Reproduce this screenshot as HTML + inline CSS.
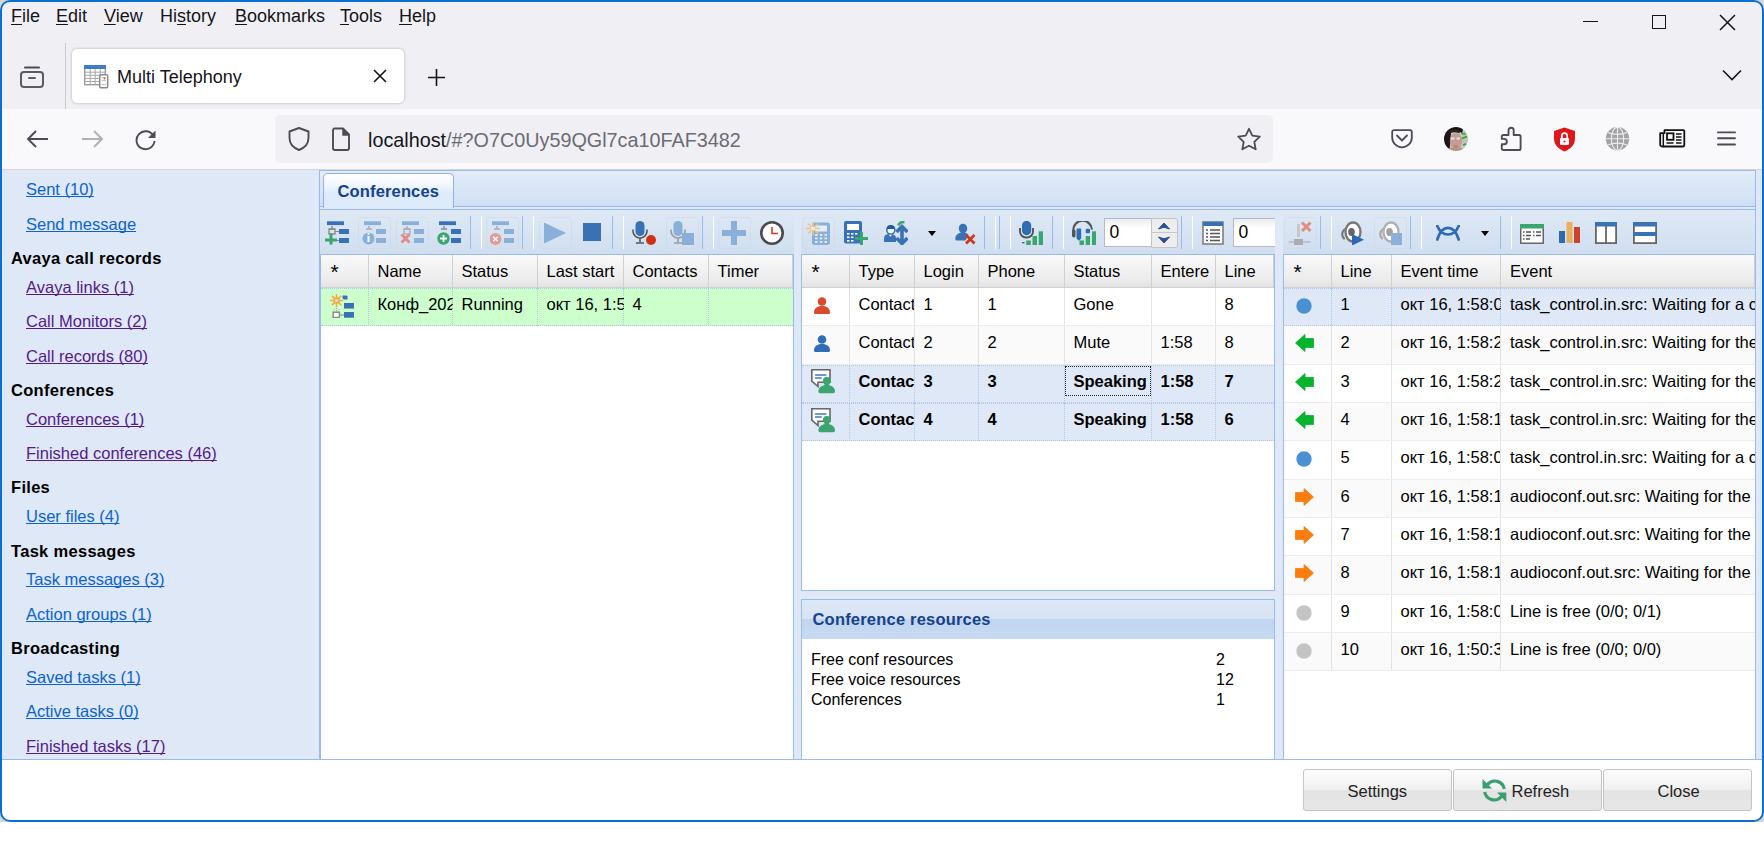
<!DOCTYPE html><html><head><meta charset="utf-8"><title>Multi Telephony</title><style>
*{box-sizing:border-box;margin:0;padding:0}
html,body{width:1764px;height:864px;overflow:hidden;background:#fff;font-family:"Liberation Sans", sans-serif;position:relative}
.a{position:absolute}
.t{position:absolute;white-space:nowrap;line-height:1}
.menu{font-size:18px;color:#15141a}
.menu u{text-decoration:underline;text-underline-offset:1.5px;text-decoration-thickness:1.2px}
.sl{position:absolute;white-space:nowrap;font-size:16.5px;line-height:1;text-decoration:underline;text-decoration-skip-ink:none;text-underline-offset:1px;text-decoration-thickness:1px;color:#0b63cf}
.sl.v{color:#551a8b}
.sh{position:absolute;white-space:nowrap;font-size:16.5px;line-height:1;color:#000;font-weight:bold;letter-spacing:0.3px}
.tb{position:absolute;height:45px;top:209px;border-top:1px solid #99bbe8;background:linear-gradient(#dfe9f5,#d0def0)}
.sep{position:absolute;top:216px;width:12px;height:33px;border-left:1px solid #99bbe8;border-right:1px solid #fff}
.ic{position:absolute;top:221px;width:24px;height:24px;overflow:visible}
.gh{position:absolute;top:255px;height:33px;background:linear-gradient(#f9f9f9,#ececec 75%,#e3e3e3);border-bottom:1px solid #d0d0d0}
.hc{position:absolute;top:0;height:32px;border-right:1px solid #d0d0d0}
.hc span{position:absolute;left:9px;top:8px;font-size:16.5px;line-height:1;white-space:nowrap;color:#000}
.row{position:absolute;height:38.4px;overflow:hidden;border-bottom:1px solid #ededed}
.cell{position:absolute;top:0;height:100%;overflow:hidden;border-right:1px solid #ededed}
.cell span{position:absolute;left:9px;top:8px;font-size:16.5px;line-height:1;white-space:nowrap;color:#000}
.btn{position:absolute;top:769px;height:42px;width:149px;border:1px solid #c4c4c4;border-radius:3px;background:linear-gradient(#fdfdfd 0%,#f0f0f0 48%,#e3e3e3 52%,#e6e6e6 100%)}
.btn span{position:absolute;top:12.5px;font-size:16.5px;line-height:1;color:#222;white-space:nowrap}
</style></head><body>
<div class="a" style="left:0;top:0;width:1764px;height:109px;background:#f0f0f4"></div>
<div class="t menu" style="left:11px;top:7px"><u>F</u>ile</div>
<div class="t menu" style="left:56px;top:7px"><u>E</u>dit</div>
<div class="t menu" style="left:104px;top:7px"><u>V</u>iew</div>
<div class="t menu" style="left:160px;top:7px">Hi<u>s</u>tory</div>
<div class="t menu" style="left:235px;top:7px"><u>B</u>ookmarks</div>
<div class="t menu" style="left:340px;top:7px"><u>T</u>ools</div>
<div class="t menu" style="left:399px;top:7px"><u>H</u>elp</div>
<div class="a" style="left:1583px;top:21px;width:15px;height:1px;background:#15141a"></div>
<div class="a" style="left:1652px;top:15px;width:14px;height:14px;border:1.2px solid #15141a"></div>
<svg class="a" style="left:1719px;top:14px" width="17" height="17" viewBox="0 0 17 17"><path d="M1 1L16 16M16 1L1 16" stroke="#15141a" stroke-width="1.5"/></svg>
<svg class="a" style="left:19px;top:63px" width="26" height="26" viewBox="0 0 26 26"><path d="M6 4.5h14" stroke="#4c4b56" stroke-width="2" stroke-linecap="round"/><rect x="2" y="9" width="22" height="15" rx="3" fill="none" stroke="#5b5b66" stroke-width="2"/><path d="M10 15h6" stroke="#5b5b66" stroke-width="2" stroke-linecap="round"/></svg>
<div class="a" style="left:65px;top:43px;width:1px;height:66px;background:#c8c8cf"></div>
<div class="a" style="left:72px;top:49px;width:332px;height:54px;background:#fff;border-radius:5px;box-shadow:0 0 3px rgba(0,0,0,.28)"></div>
<svg class="a" style="left:84px;top:65px" width="25" height="24" viewBox="0 0 25 24">
<rect x="0.7" y="0.7" width="20.6" height="19" fill="#fff" stroke="#9a9a9a" stroke-width="1.4"/>
<rect x="0" y="0" width="22" height="4" fill="#3f7cc4"/>
<path d="M0.7 7.2h20.6M0.7 10.3h20.6M0.7 13.4h20.6M0.7 16.5h20.6M6.2 4v15.7M11.2 4v15.7M16.2 4v15.7" stroke="#a8a8a8" stroke-width="1"/>
<rect x="15.7" y="9.7" width="8" height="13" rx="1.2" fill="#fff" stroke="#8a8a8a" stroke-width="1.5"/>
<path d="M17.5 12.5h4.5M17.5 15.7h4.5M17.5 19.5h4.5" stroke="#bdbdbd" stroke-width="1"/><circle cx="20.5" cy="13.5" r="0.9" fill="#e0503a"/>
</svg>
<div class="t" style="left:117px;top:68px;font-size:18px;color:#15141a">Multi Telephony</div>
<svg class="a" style="left:373px;top:69px" width="14" height="14" viewBox="0 0 14 14"><path d="M1 1L13 13M13 1L1 13" stroke="#15141a" stroke-width="1.6"/></svg>
<svg class="a" style="left:427px;top:68px" width="19" height="19" viewBox="0 0 19 19"><path d="M9.5 1v17M1 9.5h17" stroke="#15141a" stroke-width="1.6"/></svg>
<svg class="a" style="left:1722px;top:69px" width="20" height="13" viewBox="0 0 20 13"><path d="M1 1.5L10 10.5L19 1.5" fill="none" stroke="#15141a" stroke-width="1.6"/></svg>
<div class="a" style="left:0;top:109px;width:1764px;height:61px;background:#f9f9fb;border-bottom:1px solid #d4d4da"></div>
<svg class="a" style="left:26px;top:129px" width="24" height="20" viewBox="0 0 24 20"><path d="M22 10H3M10 2L2 10L10 18" fill="none" stroke="#4c4b56" stroke-width="1.9"/></svg>
<svg class="a" style="left:80px;top:129px" width="24" height="20" viewBox="0 0 24 20"><path d="M2 10H21M14 2L22 10L14 18" fill="none" stroke="#b0b0b7" stroke-width="2"/></svg>
<svg class="a" style="left:134px;top:127px" width="24" height="24" viewBox="0 0 24 24"><path d="M19.5 9A9 9 0 1 0 20.5 14" fill="none" stroke="#4c4b56" stroke-width="1.9"/><path d="M21.5 3.5V11H14z" fill="#4c4b56"/></svg>
<div class="a" style="left:275px;top:115px;width:998px;height:48px;background:#f0f0f4;border-radius:5px"></div>
<svg class="a" style="left:287px;top:126px" width="24" height="26" viewBox="0 0 24 26"><path d="M12 2L2.5 5.5V12c0 6 4.5 10 9.5 12c5-2 9.5-6 9.5-12V5.5z" fill="none" stroke="#4c4b56" stroke-width="1.9" stroke-linejoin="round"/></svg>
<svg class="a" style="left:331px;top:127px" width="20" height="24" viewBox="0 0 20 24"><path d="M3 1.5h9l6 6V21a2 2 0 0 1-2 2H4a2 2 0 0 1-2-2V3.5a2 2 0 0 1 1-2z" fill="none" stroke="#4c4b56" stroke-width="1.9" stroke-linejoin="round"/><path d="M12 1.5V8h6" fill="#4c4b56" stroke="#4c4b56" stroke-width="1.5"/></svg>
<div class="t" style="left:368px;top:131px;font-size:19.8px;color:#15141a">localhost<span style="color:#6b6b73">/#?O7C0Uy59QGl7ca10FAF3482</span></div>
<svg class="a" style="left:1236px;top:127px" width="26" height="24" viewBox="0 0 26 24"><path d="M13 1.8l3.3 6.9 7.5 1-5.5 5.2 1.4 7.4L13 18.7l-6.7 3.6 1.4-7.4L2.2 9.7l7.5-1z" fill="none" stroke="#4c4b56" stroke-width="1.8" stroke-linejoin="round"/></svg>
<svg class="a" style="left:1391px;top:129px" width="22" height="20" viewBox="0 0 22 20"><path d="M3 1.2h16a1.8 1.8 0 0 1 1.8 1.8V8.5a9.8 9.8 0 0 1-19.6 0V3a1.8 1.8 0 0 1 1.8-1.8z" fill="none" stroke="#4c4b56" stroke-width="1.8"/><path d="M6 6.5l5 5 5-5" fill="none" stroke="#4c4b56" stroke-width="1.8" stroke-linecap="round" stroke-linejoin="round"/></svg>
<svg class="a" style="left:1444px;top:127px" width="24" height="24" viewBox="0 0 24 24"><defs><clipPath id="avc"><circle cx="12" cy="12" r="12"/></clipPath><filter id="avb"><feGaussianBlur stdDeviation="0.6"/></filter></defs><g clip-path="url(#avc)"><g filter="url(#avb)"><rect width="24" height="24" fill="#c5ccc4"/><path d="M17 4l8 1v12l-5 3z" fill="#b8c8b0"/><path d="M17.5 6.5l4 0.5M18 11.5l5-2M19 18l3-1" stroke="#3c9a3a" stroke-width="1.6"/><path d="M-1 0h19c1 2 1 4 0 6-3-2-9-2-11 0l-1.5 18H-1z" fill="#1a1616"/><path d="M5 5c3-1.5 8-1.5 11 0" stroke="#2a2220" stroke-width="3" fill="none"/><ellipse cx="12" cy="14" rx="6.2" ry="8" fill="#c79a93"/><path d="M2 25c2-4 6-5 10-5s8 1 10 5z" fill="#bb9480"/><path d="M7 11.5h3.5M12.5 11.5h3.5" stroke="#dfe3ea" stroke-width="1.8"/><path d="M10 19h4" stroke="#b07070" stroke-width="1.2"/></g></g></svg>
<svg class="a" style="left:1500px;top:126px" width="23" height="26" viewBox="0 0 23 26"><path d="M8.5 9V4.3a2.6 2.6 0 0 1 5.2 0V9H19a1.6 1.6 0 0 1 1.6 1.6V22.4A1.6 1.6 0 0 1 19 24H3.4a1.6 1.6 0 0 1-1.6-1.6V18.3H4.2a2.7 2.7 0 0 0 0-5.4H1.8V10.6A1.6 1.6 0 0 1 3.4 9z" fill="none" stroke="#4c4b56" stroke-width="1.9" stroke-linejoin="round"/></svg>
<svg class="a" style="left:1553px;top:127px" width="23" height="25" viewBox="0 0 23 25"><path d="M11.5 0.5L1 4v7.5c0 6.5 4.5 10.5 10.5 13c6-2.5 10.5-6.5 10.5-13V4z" fill="#e0161b"/><rect x="7" y="11" width="9" height="7" rx="1" fill="#fff"/><path d="M8.8 11V8.8a2.7 2.7 0 0 1 5.4 0V11" fill="none" stroke="#fff" stroke-width="1.7"/><circle cx="11.5" cy="14.5" r="1.1" fill="#e0161b"/></svg>
<svg class="a" style="left:1605px;top:127px" width="25" height="24" viewBox="0 0 25 24"><circle cx="12.5" cy="11.8" r="11.7" fill="#a3a3a6"/><g fill="none" stroke="#ececef" stroke-width="1.1"><ellipse cx="12.5" cy="11.8" rx="6.2" ry="11.7"/><path d="M12.5 0v24M0.5 11.8h24"/><path d="M3 5.5c5 2.5 14 2.5 19 0M3 18c5-2.5 14-2.5 19 0"/></g></svg>
<svg class="a" style="left:1659px;top:129px" width="27" height="19" viewBox="0 0 27 19"><path d="M5.5 1.2h18.8a1 1 0 0 1 1 1V16.3a1.2 1.2 0 0 1-1.2 1.2H3a1.8 1.8 0 0 1-1.8-1.8V4.2h4.3z" fill="none" stroke="#111" stroke-width="1.8" stroke-linejoin="round"/><path d="M4.3 4.5V17" stroke="#111" stroke-width="1.5"/><rect x="8" y="4.3" width="6.5" height="6.5" fill="none" stroke="#111" stroke-width="1.8"/><path d="M17 5h5.5M17 8h5.5M17 11h5.5M7.5 14h7M17 14h5.5" stroke="#111" stroke-width="1.4"/></svg>
<svg class="a" style="left:1716px;top:130px" width="21" height="17" viewBox="0 0 21 17"><path d="M2 2.4h17M2 8.3h17M2 14.5h17" stroke="#4c4b56" stroke-width="1.9" stroke-linecap="round"/></svg>
<div class="a" style="left:0;top:170px;width:1764px;height:590px;background:#dfe8f6;border-bottom:1px solid #99bbe8"></div>
<div class="a" style="left:0;top:760px;width:1764px;height:62px;background:#fff"></div>
<div class="sl" style="left:26px;top:181px">Sent (10)</div>
<div class="sl" style="left:26px;top:215.5px">Send message</div>
<div class="sh" style="left:11px;top:250px">Avaya call records</div>
<div class="sl v" style="left:26px;top:278.5px">Avaya links (1)</div>
<div class="sl v" style="left:26px;top:313px">Call Monitors (2)</div>
<div class="sl v" style="left:26px;top:347.5px">Call records (80)</div>
<div class="sh" style="left:11px;top:381.5px">Conferences</div>
<div class="sl v" style="left:26px;top:410.5px">Conferences (1)</div>
<div class="sl v" style="left:26px;top:445px">Finished conferences (46)</div>
<div class="sh" style="left:11px;top:479px">Files</div>
<div class="sl" style="left:26px;top:508px">User files (4)</div>
<div class="sh" style="left:11px;top:542.5px">Task messages</div>
<div class="sl" style="left:26px;top:571px">Task messages (3)</div>
<div class="sl" style="left:26px;top:605.5px">Action groups (1)</div>
<div class="sh" style="left:11px;top:639.5px">Broadcasting</div>
<div class="sl" style="left:26px;top:668.5px">Saved tasks (1)</div>
<div class="sl" style="left:26px;top:703px">Active tasks (0)</div>
<div class="sl v" style="left:26px;top:737.5px">Finished tasks (17)</div>
<div class="a" style="left:319px;top:170px;width:1437px;height:590px;border:1px solid #99bbe8;border-bottom:none;background:#dfe8f6"></div>
<div class="a" style="left:320px;top:171px;width:1435px;height:36px;background:linear-gradient(#e3ecf8,#cfdff3);border-bottom:1px solid #99bbe8"></div>
<div class="a" style="left:323px;top:173px;width:131px;height:35px;border:1px solid #8db2e3;border-bottom:none;border-radius:5px 5px 0 0;background:linear-gradient(#fff 0%,#f3f8fe 30%,#deebfb 55%,#deebfb 100%)"></div>
<div class="t" style="left:337.5px;top:183px;font-size:16.5px;font-weight:bold;color:#15428b;letter-spacing:0.15px">Conferences</div>
<div class="tb" style="left:320px;width:474px"></div>
<div class="tb" style="left:801px;width:474px"></div>
<div class="tb" style="left:1283px;width:472px"></div>
<div class="a" style="left:320px;top:209px;width:1435px;height:1px;background:#99bbe8"></div>
<svg class="a" style="left:325px;top:221px" width="24" height="24" viewBox="0 0 24 24"><rect x="2" y="0.3" width="17" height="3.8" fill="#3872b4"/><path d="M7 5v3M4 8h6" stroke="#8c8c8c" stroke-width="1.5" fill="none"/><rect x="14" y="8" width="10" height="5" fill="#3872b4"/><rect x="14" y="17" width="10" height="5" fill="#3872b4"/><rect x="4" y="8" width="6" height="5" fill="none" stroke="#888" stroke-width="1.3"/><path d="M10 10.5h4M10 19.5h4" stroke="#888" stroke-width="1"/><path d="M6 12.5v11M0 19h12" stroke="#3aa56e" stroke-width="3"/></svg>
<div class="a" style="left:358px;top:217px;width:33px;height:32px;border:1px solid rgba(205,212,224,.45);border-radius:4px"></div>
<svg class="a" style="left:362px;top:221px" width="24" height="24" viewBox="0 0 24 24"><rect x="2" y="0.3" width="17" height="3.8" fill="#8aafd8"/><path d="M7 5v3M4 8h6" stroke="#aab" stroke-width="1.5" fill="none"/><rect x="14" y="8" width="10" height="5" fill="#8aafd8"/><rect x="14" y="17" width="10" height="5" fill="#8aafd8"/><circle cx="6.5" cy="17.5" r="6" fill="#8aafd8"/><path d="M6.5 15v6" stroke="#fff" stroke-width="2"/><circle cx="6.5" cy="12.8" r="1.1" fill="#fff"/></svg>
<div class="a" style="left:396px;top:217px;width:33px;height:32px;border:1px solid rgba(205,212,224,.45);border-radius:4px"></div>
<svg class="a" style="left:400px;top:221px" width="24" height="24" viewBox="0 0 24 24"><rect x="2" y="0.3" width="17" height="3.8" fill="#8aafd8"/><path d="M7 5v3M4 8h6" stroke="#aab" stroke-width="1.5" fill="none"/><rect x="14" y="8" width="10" height="5" fill="#8aafd8"/><rect x="14" y="17" width="10" height="5" fill="#8aafd8"/><rect x="4" y="8" width="6" height="5" fill="none" stroke="#aab" stroke-width="1.3"/><path d="M1.5 13.5l8 8M9.5 13.5l-8 8" stroke="#e08c82" stroke-width="2.8"/></svg>
<svg class="a" style="left:437px;top:221px" width="24" height="24" viewBox="0 0 24 24"><rect x="2" y="0.3" width="17" height="3.8" fill="#3872b4"/><path d="M7 5v3M4 8h6" stroke="#8c8c8c" stroke-width="1.5" fill="none"/><rect x="14" y="8" width="10" height="5" fill="#3872b4"/><rect x="14" y="17" width="10" height="5" fill="#3872b4"/><circle cx="6.5" cy="17.5" r="6.2" fill="#3aa56e"/><path d="M6.5 14v7M3 17.5h7" stroke="#fff" stroke-width="1.8"/></svg>
<div class="a" style="left:470px;top:216px;width:1px;height:33px;background:#99bbe8"></div>
<div class="a" style="left:481px;top:216px;width:1px;height:33px;background:#fff"></div>
<div class="a" style="left:486px;top:217px;width:33px;height:32px;border:1px solid rgba(205,212,224,.45);border-radius:4px"></div>
<svg class="a" style="left:490px;top:221px" width="24" height="24" viewBox="0 0 24 24"><rect x="2" y="0.3" width="17" height="3.8" fill="#8aafd8"/><path d="M7 5v3M4 8h6" stroke="#aab" stroke-width="1.5" fill="none"/><rect x="14" y="8" width="10" height="5" fill="#8aafd8"/><rect x="14" y="17" width="10" height="5" fill="#8aafd8"/><circle cx="5.5" cy="18" r="6" fill="#e49a93"/><path d="M3.2 15.7l4.6 4.6M7.8 15.7l-4.6 4.6" stroke="#fff" stroke-width="1.6"/></svg>
<div class="a" style="left:522px;top:216px;width:1px;height:33px;background:#99bbe8"></div>
<div class="a" style="left:533px;top:216px;width:1px;height:33px;background:#fff"></div>
<div class="a" style="left:539px;top:217px;width:33px;height:32px;border:1px solid rgba(205,212,224,.45);border-radius:4px"></div>
<svg class="a" style="left:543px;top:221px" width="24" height="24" viewBox="0 0 24 24"><path d="M1 1.5L23 12L1 22.5z" fill="#8aafd8"/></svg>
<svg class="a" style="left:583px;top:221px" width="24" height="24" viewBox="0 0 24 24"><rect x="0" y="2" width="18" height="18" fill="#3872b4"/></svg>
<div class="a" style="left:612px;top:216px;width:1px;height:33px;background:#99bbe8"></div>
<div class="a" style="left:623px;top:216px;width:1px;height:33px;background:#fff"></div>
<svg class="a" style="left:632px;top:221px" width="24" height="24" viewBox="0 0 24 24"><rect x="3.5" y="0" width="9" height="15" rx="4.5" fill="#3872b4"/><path d="M1 8.5v1.5a7 7 0 0 0 14 0V8.5M8 17v4M4 22h8" fill="none" stroke="#555" stroke-width="1.6"/><circle cx="19" cy="19" r="5" fill="#cf2f15"/></svg>
<div class="a" style="left:666px;top:217px;width:33px;height:32px;border:1px solid rgba(205,212,224,.45);border-radius:4px"></div>
<svg class="a" style="left:670px;top:221px" width="24" height="24" viewBox="0 0 24 24"><rect x="3.5" y="0" width="9" height="15" rx="4.5" fill="#8aafd8"/><path d="M1 8.5v1.5a7 7 0 0 0 14 0V8.5M8 17v4M4 22h8" fill="none" stroke="#999" stroke-width="1.6"/><rect x="12" y="12" width="12" height="12" fill="#8aafd8"/></svg>
<div class="a" style="left:702px;top:216px;width:1px;height:33px;background:#99bbe8"></div>
<div class="a" style="left:713px;top:216px;width:1px;height:33px;background:#fff"></div>
<div class="a" style="left:718px;top:217px;width:33px;height:32px;border:1px solid rgba(205,212,224,.45);border-radius:4px"></div>
<svg class="a" style="left:722px;top:221px" width="24" height="24" viewBox="0 0 24 24"><path d="M12 0v24M0 12h24" stroke="#8aafd8" stroke-width="6"/></svg>
<svg class="a" style="left:760px;top:221px" width="24" height="24" viewBox="0 0 24 24"><circle cx="12" cy="12" r="10.7" fill="#fff" stroke="#4a4a4a" stroke-width="2.6"/><path d="M12 6v6.5h6" fill="none" stroke="#d33a1c" stroke-width="1.6"/></svg>
<div class="a" style="left:802px;top:217px;width:33px;height:32px;border:1px solid rgba(205,212,224,.45);border-radius:4px"></div>
<svg class="a" style="left:806px;top:221px" width="24" height="24" viewBox="0 0 24 24"><rect x="6" y="1.5" width="18" height="22.5" rx="2.5" fill="#8aafd8"/><rect x="9" y="4.5" width="12" height="6" fill="#e6edf8"/><g fill="#e6edf8"><rect x="9" y="13" width="2.5" height="1.8"/><rect x="13.8" y="13" width="2.5" height="1.8"/><rect x="18.5" y="13" width="2.5" height="1.8"/><rect x="9" y="16.5" width="2.5" height="1.8"/><rect x="13.8" y="16.5" width="2.5" height="1.8"/><rect x="18.5" y="16.5" width="2.5" height="1.8"/><rect x="9" y="20" width="2.5" height="1.8"/><rect x="13.8" y="20" width="2.5" height="1.8"/><rect x="18.5" y="20" width="2.5" height="1.8"/></g><path d="M7 0.5v14M0 7.5h14M2 2.5l10 10M12 2.5l-10 10" stroke="#e8c58a" stroke-width="1.4"/><circle cx="7" cy="7.5" r="2" fill="#f6ead6"/></svg>
<svg class="a" style="left:844px;top:221px" width="24" height="24" viewBox="0 0 24 24"><rect x="0" y="0" width="18" height="22.5" rx="2" fill="#3872b4"/><rect x="3" y="3" width="12" height="6" fill="#fff"/><g fill="#fff"><rect x="3" y="12" width="2.5" height="1.6"/><rect x="7" y="12" width="2.5" height="1.6"/><rect x="11" y="12" width="2.5" height="1.6"/><rect x="3" y="15.5" width="2.5" height="1.6"/><rect x="7" y="15.5" width="2.5" height="1.6"/><rect x="3" y="19" width="2.5" height="1.6"/><rect x="7" y="19" width="2.5" height="1.6"/></g><path d="M17.5 11v13M11 17.5h13" stroke="#3aa56e" stroke-width="3"/></svg>
<svg class="a" style="left:884px;top:221px" width="24" height="24" viewBox="0 0 24 24"><path d="M14.5 4.5c0.5-2.5 2.5-3.5 6-3.5" stroke="#3aa56e" stroke-width="2.6" fill="none"/><path d="M0 21v-3.5c0-3 2-4.5 5-4.5h2c3 0 5 1.5 5 4.5V21z" fill="#3872b4"/><path d="M4.5 13.2l2 2.5 2-2.5z" fill="#fff"/><circle cx="6.8" cy="9" r="4" fill="#fff" stroke="#3872b4" stroke-width="1.6"/><path d="M2.8 8a4 4 0 0 1 8 0z" fill="#1f5aa6"/><path d="M18 6.5v15M12.5 11l5.5-5.5 5.5 5.5M12.5 17l5.5 5.5 5.5-5.5" fill="none" stroke="#3872b4" stroke-width="3.6"/></svg>
<svg class="a" style="left:928px;top:231px" width="8" height="5" viewBox="0 0 8 5"><path d="M0 0h8L4 5z" fill="#000"/></svg>
<svg class="a" style="left:955px;top:221px" width="24" height="24" viewBox="0 0 24 24"><ellipse cx="8" cy="7.5" rx="4.2" ry="4.8" fill="#3872b4"/><path d="M0.3 18c0-4 3-6.5 7.5-6.5 2.5 0 4.5 0.8 5.7 2.2L10.5 19.5H1.8A1.5 1.5 0 0 1 0.3 18z" fill="#3872b4"/><path d="M11 14l8.5 8.5M19.5 14L11 22.5" stroke="#d2361f" stroke-width="2.8"/></svg>
<div class="a" style="left:984px;top:216px;width:1px;height:33px;background:#99bbe8"></div>
<div class="a" style="left:995px;top:216px;width:1px;height:33px;background:#fff"></div>
<div class="a" style="left:999px;top:216px;width:1px;height:33px;background:#99bbe8"></div>
<div class="a" style="left:1010px;top:216px;width:1px;height:33px;background:#fff"></div>
<svg class="a" style="left:1019px;top:221px" width="24" height="24" viewBox="0 0 24 24"><path d="M1 7v3.5a6 6 0 0 0 6 6h1a6 6 0 0 0 6-6V7" fill="none" stroke="#555" stroke-width="1.9"/><rect x="3" y="-0.2" width="9.2" height="14.4" rx="4.6" fill="#2f6db0"/><path d="M3 21.7h2.5" stroke="#555" stroke-width="1.3"/><rect x="7.2" y="19.5" width="4.6" height="4.5" fill="#3aa56e"/><rect x="13.5" y="15" width="4.5" height="9" fill="#3aa56e"/><rect x="19.7" y="10.3" width="4.3" height="13.7" fill="#3aa56e"/></svg>
<div class="a" style="left:1052px;top:216px;width:1px;height:33px;background:#99bbe8"></div>
<div class="a" style="left:1063px;top:216px;width:1px;height:33px;background:#fff"></div>
<svg class="a" style="left:1072px;top:221px" width="24" height="24" viewBox="0 0 24 24"><path d="M1.3 12V9.5a9.3 9.3 0 0 1 18.6 -1" fill="none" stroke="#555" stroke-width="2.2"/><rect x="0" y="8.5" width="3.5" height="8" rx="1.7" fill="#555"/><path d="M4.5 8.5a1 1 0 0 1 1-1h2.7a1 1 0 0 1 1 1v9l-2.3 2.3l-2.4-2.3z" fill="#2f6db0"/><rect x="13.7" y="7.8" width="4.3" height="4.5" rx="1" fill="#2f6db0"/><rect x="7.5" y="19.5" width="4.5" height="4.5" fill="#3aa56e"/><rect x="13.7" y="15" width="4.3" height="9" fill="#3aa56e"/><rect x="20" y="10.3" width="4.2" height="13.7" fill="#3aa56e"/></svg>
<div class="a" style="left:1104px;top:218px;width:48px;height:29px;background:linear-gradient(#e9eded,#fff 35%);border:1px solid #b5b8c8;border-right:none"></div>
<div class="t" style="left:1109.5px;top:224px;font-size:17.5px;color:#000">0</div>
<div class="a" style="left:1151px;top:218px;width:27px;height:30px;background:#ededed;border:1px solid #c2c4cc;border-radius:0 3px 3px 0"></div>
<div class="a" style="left:1152px;top:232px;width:25px;height:1px;background:#c8c8c8"></div>
<svg class="a" style="left:1157.5px;top:222px" width="12" height="8" viewBox="0 0 12 8"><path d="M0.5 7L6 1L11.5 7L6 5.2z" fill="#2d4f94" stroke="#2d4f94" stroke-width="1" stroke-linejoin="round"/></svg>
<svg class="a" style="left:1157.5px;top:236px" width="12" height="8" viewBox="0 0 12 8"><path d="M0.5 1L6 7L11.5 1L6 2.8z" fill="#2d4f94" stroke="#2d4f94" stroke-width="1" stroke-linejoin="round"/></svg>
<div class="a" style="left:1181px;top:216px;width:1px;height:33px;background:#99bbe8"></div>
<div class="a" style="left:1192px;top:216px;width:1px;height:33px;background:#fff"></div>
<svg class="a" style="left:1202px;top:221px" width="24" height="24" viewBox="0 0 24 24"><rect x="1" y="1" width="20" height="22" fill="#fff" stroke="#777" stroke-width="1.5"/><rect x="1" y="1" width="20" height="4" fill="#3872b4"/><g stroke="#555" stroke-width="1.3"><path d="M4 9h2M8 9h10M4 12.5h2M8 12.5h10M4 16h2M8 16h10M4 19.5h2M8 19.5h10"/></g></svg>
<div class="a" style="left:1233px;top:218px;width:42px;height:29px;background:linear-gradient(#e9eded,#fff 35%);border:1px solid #b5b8c8;border-right:none"></div>
<div class="t" style="left:1238.5px;top:224px;font-size:17.5px;color:#000">0</div>
<div class="a" style="left:1284px;top:217px;width:33px;height:32px;border:1px solid rgba(205,212,224,.45);border-radius:4px"></div>
<svg class="a" style="left:1288px;top:221px" width="24" height="24" viewBox="0 0 24 24"><path d="M0.5 21h22" stroke="#c0c3c8" stroke-width="2.2"/><rect x="6" y="18" width="9" height="6" fill="#a9adb3"/><path d="M10.5 3v13" stroke="#c4c6ca" stroke-width="3"/><path d="M14 1.5l8.5 8.5M22.5 1.5L14 10" stroke="#e08c82" stroke-width="3"/></svg>
<div class="a" style="left:1320px;top:216px;width:1px;height:33px;background:#99bbe8"></div>
<div class="a" style="left:1331px;top:216px;width:1px;height:33px;background:#fff"></div>
<svg class="a" style="left:1340px;top:221px" width="24" height="24" viewBox="0 0 24 24"><path d="M4.5 8.5a6 6 0 0 0 -0.5 9" fill="none" stroke="#777" stroke-width="2.2" stroke-linecap="round"/><ellipse cx="13" cy="11" rx="7.5" ry="9.5" fill="#fff" stroke="#777" stroke-width="2.3"/><ellipse cx="11.5" cy="11" rx="3.3" ry="4" fill="#666"/><path d="M12 13L24 18.8L12 24.5z" fill="#2c68b5"/></svg>
<div class="a" style="left:1374px;top:217px;width:33px;height:32px;border:1px solid rgba(205,212,224,.45);border-radius:4px"></div>
<svg class="a" style="left:1378px;top:221px" width="24" height="24" viewBox="0 0 24 24"><path d="M4.5 8.5a6 6 0 0 0 -0.5 9" fill="none" stroke="#aaa" stroke-width="2.2" stroke-linecap="round"/><ellipse cx="13" cy="11" rx="7.5" ry="9.5" fill="#fff" stroke="#b0b0b0" stroke-width="2.3"/><ellipse cx="11.5" cy="11" rx="3.3" ry="4" fill="#a0a0a0"/><rect x="13" y="12" width="11" height="12" fill="#8aafd8"/></svg>
<div class="a" style="left:1410px;top:216px;width:1px;height:33px;background:#99bbe8"></div>
<div class="a" style="left:1421px;top:216px;width:1px;height:33px;background:#fff"></div>
<svg class="a" style="left:1436px;top:225px" width="24" height="16" viewBox="0 0 24 16"><path d="M1.3 1C6 12.3 18 12.3 22.7 1M1.3 14.5C6 -1.1 18 -1.1 22.7 14.5" fill="none" stroke="#2e6bb5" stroke-width="2.7" stroke-linecap="round"/></svg>
<svg class="a" style="left:1481px;top:231px" width="8" height="5" viewBox="0 0 8 5"><path d="M0 0h8L4 5z" fill="#000"/></svg>
<div class="a" style="left:1500px;top:216px;width:1px;height:33px;background:#99bbe8"></div>
<div class="a" style="left:1511px;top:216px;width:1px;height:33px;background:#fff"></div>
<svg class="a" style="left:1520px;top:224px" width="24" height="20" viewBox="0 0 24 20"><rect x="0.75" y="0.75" width="22.5" height="18.5" fill="#fff" stroke="#666" stroke-width="1.5"/><rect x="0" y="0" width="24" height="4.5" fill="#3aa56e"/><g stroke="#555" stroke-width="1.4"><path d="M3 8h1.5M6 8h5M13 8h1.5M16 8h5M3 11.5h1.5M6 11.5h5M13 11.5h1.5M16 11.5h5M3 15h1.5M6 15h4"/></g></svg>
<svg class="a" style="left:1559px;top:222px" width="22" height="21" viewBox="0 0 22 21"><rect x="0" y="9" width="6" height="12" fill="#2f6ab1"/><rect x="7.5" y="0" width="6" height="21" fill="#ebb05a"/><rect x="15" y="5" width="6" height="16" fill="#d0432b"/></svg>
<svg class="a" style="left:1595px;top:222px" width="22" height="22" viewBox="0 0 22 22"><rect x="0.9" y="0.9" width="20.2" height="20.2" fill="#fff" stroke="#666" stroke-width="1.8"/><rect x="0" y="0" width="22" height="4.5" fill="#3a72b4"/><path d="M11 4v17" stroke="#666" stroke-width="1.8"/></svg>
<svg class="a" style="left:1633px;top:222px" width="24" height="22" viewBox="0 0 24 22"><rect x="0.9" y="0.9" width="22.2" height="20.2" fill="#fff" stroke="#666" stroke-width="1.8"/><rect x="0" y="0" width="24" height="4.5" fill="#3a72b4"/><rect x="0" y="10" width="24" height="4" fill="#3a72b4"/></svg>
<div class="a" style="left:320px;top:254px;width:474px;height:506px;background:#fff;border:1px solid #99bbe8"></div>
<div class="gh" style="left:321px;width:472px">
<div class="hc" style="left:-1px;width:48.5px"><span style="font-size:21px;top:5.5px;left:10.5px">*</span></div>
<div class="hc" style="left:47.5px;width:84.0px"><span>Name</span></div>
<div class="hc" style="left:131.5px;width:85.0px"><span>Status</span></div>
<div class="hc" style="left:216.5px;width:86.0px"><span>Last start</span></div>
<div class="hc" style="left:302.5px;width:85.0px"><span>Contacts</span></div>
<div class="hc" style="left:387.5px;width:84.5px"><span>Timer</span></div>
</div>
<div class="a" style="left:321px;top:288.000px;width:472px;height:38.333px;background:#ccffcc;overflow:hidden">
<div class="cell" style="left:-1px;width:48.5px;border-right:none"><svg style="position:absolute;left:10px;top:6px" width="24" height="24" viewBox="0 0 24 24"><path d="M6.5 0v13M0 6.5h13M1.9 1.9l9.2 9.2M11.1 1.9l-9.2 9.2" stroke="#f3a94a" stroke-width="1.6"/><circle cx="6.5" cy="6.5" r="3.2" fill="#f3a94a"/><circle cx="6.5" cy="6.5" r="1.6" fill="#fde6c0"/><path d="M12.5 1.5h4a1 1 0 0 1 1 1v3h-3a2 2 0 0 1-2-2z" fill="#3872b4"/><rect x="14" y="9" width="10" height="5.6" fill="#3872b4"/><rect x="14" y="18" width="10" height="5.7" fill="#3872b4"/><path d="M6.5 14v4" stroke="#999" stroke-width="1.2" stroke-dasharray="1 1"/><path d="M3.6 15.5h1M8.4 15.5h1" stroke="#aaa" stroke-width="1"/><rect x="3.2" y="18.2" width="6.2" height="5.3" fill="#fff" stroke="#8a8a8a" stroke-width="1.5"/><path d="M9.5 21h4.5" stroke="#8a8a8a" stroke-width="1"/></svg></div>
<div class="a" style="left:46.5px;top:0;width:0;height:100%;border-left:1px dotted #b3c6ea"></div>
<div class="cell" style="left:47.5px;width:84.0px;border-right:none"><span style="top:8.1px">Конф_2023-10-16</span></div>
<div class="a" style="left:130.5px;top:0;width:0;height:100%;border-left:1px dotted #b3c6ea"></div>
<div class="cell" style="left:131.5px;width:85.0px;border-right:none"><span style="top:8.1px">Running</span></div>
<div class="a" style="left:215.5px;top:0;width:0;height:100%;border-left:1px dotted #b3c6ea"></div>
<div class="cell" style="left:216.5px;width:86.0px;border-right:none"><span style="top:8.1px">окт 16, 1:58:12</span></div>
<div class="a" style="left:301.5px;top:0;width:0;height:100%;border-left:1px dotted #b3c6ea"></div>
<div class="cell" style="left:302.5px;width:85.0px;border-right:none"><span style="top:8.1px">4</span></div>
<div class="a" style="left:386.5px;top:0;width:0;height:100%;border-left:1px dotted #b3c6ea"></div>
<div class="cell" style="left:387.5px;width:84.5px;border-right:none"><span style="top:8.1px"></span></div>
<div class="a" style="left:0;top:0;width:100%;height:100%;border-top:1px dotted #b3c6ea;border-bottom:1px dotted #b3c6ea"></div>
</div>
<div class="a" style="left:801px;top:254px;width:474px;height:337px;background:#fff;border:1px solid #99bbe8"></div>
<div class="gh" style="left:802px;width:472px">
<div class="hc" style="left:-1px;width:48.5px"><span style="font-size:21px;top:5.5px;left:10.5px">*</span></div>
<div class="hc" style="left:47.5px;width:65.0px"><span>Type</span></div>
<div class="hc" style="left:112.5px;width:64.0px"><span>Login</span></div>
<div class="hc" style="left:176.5px;width:86.0px"><span>Phone</span></div>
<div class="hc" style="left:262.5px;width:87.0px"><span>Status</span></div>
<div class="hc" style="left:349.5px;width:64.0px"><span>Entere</span></div>
<div class="hc" style="left:413.5px;width:58.5px"><span>Line</span></div>
</div>
<div class="a" style="left:802px;top:288.000px;width:472px;height:38.333px;background:#fff;overflow:hidden">
<div class="cell" style="left:-1px;width:48.5px;border-right:none"><svg style="position:absolute;left:12px;top:9px" width="18" height="17" viewBox="0 0 18 17"><circle cx="9" cy="4.5" r="4.3" fill="#d84a2b"/><path d="M1 15.5c0-4 3-6.5 8-6.5s8 2.5 8 6.5a1.5 1.5 0 0 1-1.5 1.5h-13A1.5 1.5 0 0 1 1 15.5z" fill="#d84a2b"/></svg></div>
<div class="a" style="left:46.5px;top:0;width:1px;height:100%;background:#e3e3e3"></div>
<div class="cell" style="left:47.5px;width:65.0px;border-right:none"><span style="top:8.1px">Contact</span></div>
<div class="a" style="left:111.5px;top:0;width:1px;height:100%;background:#e3e3e3"></div>
<div class="cell" style="left:112.5px;width:64.0px;border-right:none"><span style="top:8.1px">1</span></div>
<div class="a" style="left:175.5px;top:0;width:1px;height:100%;background:#e3e3e3"></div>
<div class="cell" style="left:176.5px;width:86.0px;border-right:none"><span style="top:8.1px">1</span></div>
<div class="a" style="left:261.5px;top:0;width:1px;height:100%;background:#e3e3e3"></div>
<div class="cell" style="left:262.5px;width:87.0px;border-right:none"><span style="top:8.1px">Gone</span></div>
<div class="a" style="left:348.5px;top:0;width:1px;height:100%;background:#e3e3e3"></div>
<div class="cell" style="left:349.5px;width:64.0px;border-right:none"><span style="top:8.1px"></span></div>
<div class="a" style="left:412.5px;top:0;width:1px;height:100%;background:#e3e3e3"></div>
<div class="cell" style="left:413.5px;width:58.5px;border-right:none"><span style="top:8.1px">8</span></div>
<div class="a" style="left:0;bottom:0;width:100%;height:1px;background:#ededed"></div>
</div>
<div class="a" style="left:802px;top:326.333px;width:472px;height:38.333px;background:#fafafa;overflow:hidden">
<div class="cell" style="left:-1px;width:48.5px;border-right:none"><svg style="position:absolute;left:12px;top:9px" width="18" height="17" viewBox="0 0 18 17"><circle cx="9" cy="4.5" r="4.3" fill="#2f6eb5"/><path d="M1 15.5c0-4 3-6.5 8-6.5s8 2.5 8 6.5a1.5 1.5 0 0 1-1.5 1.5h-13A1.5 1.5 0 0 1 1 15.5z" fill="#2f6eb5"/></svg></div>
<div class="a" style="left:46.5px;top:0;width:1px;height:100%;background:#e3e3e3"></div>
<div class="cell" style="left:47.5px;width:65.0px;border-right:none"><span style="top:8.1px">Contact</span></div>
<div class="a" style="left:111.5px;top:0;width:1px;height:100%;background:#e3e3e3"></div>
<div class="cell" style="left:112.5px;width:64.0px;border-right:none"><span style="top:8.1px">2</span></div>
<div class="a" style="left:175.5px;top:0;width:1px;height:100%;background:#e3e3e3"></div>
<div class="cell" style="left:176.5px;width:86.0px;border-right:none"><span style="top:8.1px">2</span></div>
<div class="a" style="left:261.5px;top:0;width:1px;height:100%;background:#e3e3e3"></div>
<div class="cell" style="left:262.5px;width:87.0px;border-right:none"><span style="top:8.1px">Mute</span></div>
<div class="a" style="left:348.5px;top:0;width:1px;height:100%;background:#e3e3e3"></div>
<div class="cell" style="left:349.5px;width:64.0px;border-right:none"><span style="top:8.1px">1:58</span></div>
<div class="a" style="left:412.5px;top:0;width:1px;height:100%;background:#e3e3e3"></div>
<div class="cell" style="left:413.5px;width:58.5px;border-right:none"><span style="top:8.1px">8</span></div>
<div class="a" style="left:0;bottom:0;width:100%;height:1px;background:#ededed"></div>
</div>
<div class="a" style="left:802px;top:364.666px;width:472px;height:38.333px;background:#dfe8f6;overflow:hidden">
<div class="cell" style="left:-1px;width:48.5px;border-right:none"><svg style="position:absolute;left:9.5px;top:4.8px" width="25" height="25" viewBox="0 0 25 25"><path d="M0.8 0.8H19V13.2H7V17.6L0.8 12.2z" fill="#fff" stroke="#666" stroke-width="1.6" stroke-linejoin="miter"/><path d="M4.5 6h10.3M4.5 9h5.7" stroke="#3b78c0" stroke-width="1.5" stroke-linecap="round"/><ellipse cx="15.8" cy="11.8" rx="3.9" ry="3.9" fill="#3aa56e"/><path d="M13.5 14h4.6v2.5h-4.6z" fill="#3aa56e"/><path d="M7.4 22.5c0-4 3.5-6.5 8.3-6.5s8.3 2.5 8.3 6.5a1.7 1.7 0 0 1-1.7 1.7H9.1a1.7 1.7 0 0 1-1.7-1.7z" fill="#3aa56e"/></svg></div>
<div class="a" style="left:46.5px;top:0;width:0;height:100%;border-left:1px dotted #b3c6ea"></div>
<div class="cell" style="left:47.5px;width:65.0px;border-right:none"><span style="font-weight:bold;top:8.1px">Contact</span></div>
<div class="a" style="left:111.5px;top:0;width:0;height:100%;border-left:1px dotted #b3c6ea"></div>
<div class="cell" style="left:112.5px;width:64.0px;border-right:none"><span style="font-weight:bold;top:8.1px">3</span></div>
<div class="a" style="left:175.5px;top:0;width:0;height:100%;border-left:1px dotted #b3c6ea"></div>
<div class="cell" style="left:176.5px;width:86.0px;border-right:none"><span style="font-weight:bold;top:8.1px">3</span></div>
<div class="a" style="left:261.5px;top:0;width:0;height:100%;border-left:1px dotted #b3c6ea"></div>
<div class="cell" style="left:262.5px;width:87.0px;border-right:none"><span style="font-weight:bold;top:8.1px">Speaking</span></div>
<div class="a" style="left:348.5px;top:0;width:0;height:100%;border-left:1px dotted #b3c6ea"></div>
<div class="cell" style="left:349.5px;width:64.0px;border-right:none"><span style="font-weight:bold;top:8.1px">1:58</span></div>
<div class="a" style="left:412.5px;top:0;width:0;height:100%;border-left:1px dotted #b3c6ea"></div>
<div class="cell" style="left:413.5px;width:58.5px;border-right:none"><span style="font-weight:bold;top:8.1px">7</span></div>
<div class="a" style="left:0;top:0;width:100%;height:100%;border-top:1px dotted #b3c6ea;border-bottom:1px dotted #b3c6ea"></div>
</div>
<div class="a" style="left:802px;top:402.999px;width:472px;height:38.333px;background:#dfe8f6;overflow:hidden">
<div class="cell" style="left:-1px;width:48.5px;border-right:none"><svg style="position:absolute;left:9.5px;top:4.8px" width="25" height="25" viewBox="0 0 25 25"><path d="M0.8 0.8H19V13.2H7V17.6L0.8 12.2z" fill="#fff" stroke="#666" stroke-width="1.6" stroke-linejoin="miter"/><path d="M4.5 6h10.3M4.5 9h5.7" stroke="#3b78c0" stroke-width="1.5" stroke-linecap="round"/><ellipse cx="15.8" cy="11.8" rx="3.9" ry="3.9" fill="#3aa56e"/><path d="M13.5 14h4.6v2.5h-4.6z" fill="#3aa56e"/><path d="M7.4 22.5c0-4 3.5-6.5 8.3-6.5s8.3 2.5 8.3 6.5a1.7 1.7 0 0 1-1.7 1.7H9.1a1.7 1.7 0 0 1-1.7-1.7z" fill="#3aa56e"/></svg></div>
<div class="a" style="left:46.5px;top:0;width:0;height:100%;border-left:1px dotted #b3c6ea"></div>
<div class="cell" style="left:47.5px;width:65.0px;border-right:none"><span style="font-weight:bold;top:8.1px">Contact</span></div>
<div class="a" style="left:111.5px;top:0;width:0;height:100%;border-left:1px dotted #b3c6ea"></div>
<div class="cell" style="left:112.5px;width:64.0px;border-right:none"><span style="font-weight:bold;top:8.1px">4</span></div>
<div class="a" style="left:175.5px;top:0;width:0;height:100%;border-left:1px dotted #b3c6ea"></div>
<div class="cell" style="left:176.5px;width:86.0px;border-right:none"><span style="font-weight:bold;top:8.1px">4</span></div>
<div class="a" style="left:261.5px;top:0;width:0;height:100%;border-left:1px dotted #b3c6ea"></div>
<div class="cell" style="left:262.5px;width:87.0px;border-right:none"><span style="font-weight:bold;top:8.1px">Speaking</span></div>
<div class="a" style="left:348.5px;top:0;width:0;height:100%;border-left:1px dotted #b3c6ea"></div>
<div class="cell" style="left:349.5px;width:64.0px;border-right:none"><span style="font-weight:bold;top:8.1px">1:58</span></div>
<div class="a" style="left:412.5px;top:0;width:0;height:100%;border-left:1px dotted #b3c6ea"></div>
<div class="cell" style="left:413.5px;width:58.5px;border-right:none"><span style="font-weight:bold;top:8.1px">6</span></div>
<div class="a" style="left:0;top:0;width:100%;height:100%;border-top:1px dotted #b3c6ea;border-bottom:1px dotted #b3c6ea"></div>
</div>
<div class="a" style="left:1065px;top:366px;width:86px;height:30px;border:1px dotted #222"></div>
<div class="a" style="left:1283px;top:254px;width:473px;height:506px;background:#fff;border:1px solid #99bbe8"></div>
<div class="gh" style="left:1284px;width:471px">
<div class="hc" style="left:-1px;width:48.5px"><span style="font-size:21px;top:5.5px;left:10.5px">*</span></div>
<div class="hc" style="left:47.5px;width:60.0px"><span>Line</span></div>
<div class="hc" style="left:107.5px;width:109.5px"><span>Event time</span></div>
<div class="hc" style="left:217px;width:254px"><span>Event</span></div>
</div>
<div class="a" style="left:1284px;top:288.000px;width:471px;height:38.333px;background:#dfe8f6;overflow:hidden">
<div class="cell" style="left:-1px;width:48.5px;border-right:none"><svg style="position:absolute;left:13px;top:10px" width="16" height="16" viewBox="0 0 16 16"><circle cx="8" cy="8" r="7.7" fill="#4a90d2"/></svg></div>
<div class="a" style="left:46.5px;top:0;width:0;height:100%;border-left:1px dotted #b3c6ea"></div>
<div class="cell" style="left:47.5px;width:60.0px;border-right:none"><span style="top:8.1px">1</span></div>
<div class="a" style="left:106.5px;top:0;width:0;height:100%;border-left:1px dotted #b3c6ea"></div>
<div class="cell" style="left:107.5px;width:109.5px;border-right:none"><span style="top:8.1px">окт 16, 1:58:05</span></div>
<div class="a" style="left:216.0px;top:0;width:0;height:100%;border-left:1px dotted #b3c6ea"></div>
<div class="cell" style="left:217px;width:254px;border-right:none"><span style="top:8.1px">task_control.in.src: Waiting for a call</span></div>
<div class="a" style="left:0;top:0;width:100%;height:100%;border-top:1px dotted #b3c6ea;border-bottom:1px dotted #b3c6ea"></div>
</div>
<div class="a" style="left:1284px;top:326.333px;width:471px;height:38.333px;background:#fafafa;overflow:hidden">
<div class="cell" style="left:-1px;width:48.5px;border-right:none"><svg style="position:absolute;left:12px;top:8px" width="19" height="18" viewBox="0 0 19 18"><path d="M0.5 9L10 0.5V4.5H18.5V13.5H10V17.5z" fill="#04b42c" stroke="#04b42c" stroke-width="0.8" stroke-linejoin="round"/></svg></div>
<div class="a" style="left:46.5px;top:0;width:1px;height:100%;background:#e3e3e3"></div>
<div class="cell" style="left:47.5px;width:60.0px;border-right:none"><span style="top:8.1px">2</span></div>
<div class="a" style="left:106.5px;top:0;width:1px;height:100%;background:#e3e3e3"></div>
<div class="cell" style="left:107.5px;width:109.5px;border-right:none"><span style="top:8.1px">окт 16, 1:58:21</span></div>
<div class="a" style="left:216.0px;top:0;width:1px;height:100%;background:#e3e3e3"></div>
<div class="cell" style="left:217px;width:254px;border-right:none"><span style="top:8.1px">task_control.in.src: Waiting for the</span></div>
<div class="a" style="left:0;bottom:0;width:100%;height:1px;background:#ededed"></div>
</div>
<div class="a" style="left:1284px;top:364.666px;width:471px;height:38.333px;background:#fff;overflow:hidden">
<div class="cell" style="left:-1px;width:48.5px;border-right:none"><svg style="position:absolute;left:12px;top:8px" width="19" height="18" viewBox="0 0 19 18"><path d="M0.5 9L10 0.5V4.5H18.5V13.5H10V17.5z" fill="#04b42c" stroke="#04b42c" stroke-width="0.8" stroke-linejoin="round"/></svg></div>
<div class="a" style="left:46.5px;top:0;width:1px;height:100%;background:#e3e3e3"></div>
<div class="cell" style="left:47.5px;width:60.0px;border-right:none"><span style="top:8.1px">3</span></div>
<div class="a" style="left:106.5px;top:0;width:1px;height:100%;background:#e3e3e3"></div>
<div class="cell" style="left:107.5px;width:109.5px;border-right:none"><span style="top:8.1px">окт 16, 1:58:21</span></div>
<div class="a" style="left:216.0px;top:0;width:1px;height:100%;background:#e3e3e3"></div>
<div class="cell" style="left:217px;width:254px;border-right:none"><span style="top:8.1px">task_control.in.src: Waiting for the</span></div>
<div class="a" style="left:0;bottom:0;width:100%;height:1px;background:#ededed"></div>
</div>
<div class="a" style="left:1284px;top:402.999px;width:471px;height:38.333px;background:#fafafa;overflow:hidden">
<div class="cell" style="left:-1px;width:48.5px;border-right:none"><svg style="position:absolute;left:12px;top:8px" width="19" height="18" viewBox="0 0 19 18"><path d="M0.5 9L10 0.5V4.5H18.5V13.5H10V17.5z" fill="#04b42c" stroke="#04b42c" stroke-width="0.8" stroke-linejoin="round"/></svg></div>
<div class="a" style="left:46.5px;top:0;width:1px;height:100%;background:#e3e3e3"></div>
<div class="cell" style="left:47.5px;width:60.0px;border-right:none"><span style="top:8.1px">4</span></div>
<div class="a" style="left:106.5px;top:0;width:1px;height:100%;background:#e3e3e3"></div>
<div class="cell" style="left:107.5px;width:109.5px;border-right:none"><span style="top:8.1px">окт 16, 1:58:11</span></div>
<div class="a" style="left:216.0px;top:0;width:1px;height:100%;background:#e3e3e3"></div>
<div class="cell" style="left:217px;width:254px;border-right:none"><span style="top:8.1px">task_control.in.src: Waiting for the</span></div>
<div class="a" style="left:0;bottom:0;width:100%;height:1px;background:#ededed"></div>
</div>
<div class="a" style="left:1284px;top:441.332px;width:471px;height:38.333px;background:#fff;overflow:hidden">
<div class="cell" style="left:-1px;width:48.5px;border-right:none"><svg style="position:absolute;left:13px;top:10px" width="16" height="16" viewBox="0 0 16 16"><circle cx="8" cy="8" r="7.7" fill="#4a90d2"/></svg></div>
<div class="a" style="left:46.5px;top:0;width:1px;height:100%;background:#e3e3e3"></div>
<div class="cell" style="left:47.5px;width:60.0px;border-right:none"><span style="top:8.1px">5</span></div>
<div class="a" style="left:106.5px;top:0;width:1px;height:100%;background:#e3e3e3"></div>
<div class="cell" style="left:107.5px;width:109.5px;border-right:none"><span style="top:8.1px">окт 16, 1:58:05</span></div>
<div class="a" style="left:216.0px;top:0;width:1px;height:100%;background:#e3e3e3"></div>
<div class="cell" style="left:217px;width:254px;border-right:none"><span style="top:8.1px">task_control.in.src: Waiting for a call</span></div>
<div class="a" style="left:0;bottom:0;width:100%;height:1px;background:#ededed"></div>
</div>
<div class="a" style="left:1284px;top:479.665px;width:471px;height:38.333px;background:#fafafa;overflow:hidden">
<div class="cell" style="left:-1px;width:48.5px;border-right:none"><svg style="position:absolute;left:12px;top:8px" width="19" height="18" viewBox="0 0 19 18"><path d="M18.5 9L9 0.5V4.5H0.5V13.5H9V17.5z" fill="#fb7d0e" stroke="#fb7d0e" stroke-width="0.8" stroke-linejoin="round"/></svg></div>
<div class="a" style="left:46.5px;top:0;width:1px;height:100%;background:#e3e3e3"></div>
<div class="cell" style="left:47.5px;width:60.0px;border-right:none"><span style="top:8.1px">6</span></div>
<div class="a" style="left:106.5px;top:0;width:1px;height:100%;background:#e3e3e3"></div>
<div class="cell" style="left:107.5px;width:109.5px;border-right:none"><span style="top:8.1px">окт 16, 1:58:11</span></div>
<div class="a" style="left:216.0px;top:0;width:1px;height:100%;background:#e3e3e3"></div>
<div class="cell" style="left:217px;width:254px;border-right:none"><span style="top:8.1px">audioconf.out.src: Waiting for the</span></div>
<div class="a" style="left:0;bottom:0;width:100%;height:1px;background:#ededed"></div>
</div>
<div class="a" style="left:1284px;top:517.998px;width:471px;height:38.333px;background:#fff;overflow:hidden">
<div class="cell" style="left:-1px;width:48.5px;border-right:none"><svg style="position:absolute;left:12px;top:8px" width="19" height="18" viewBox="0 0 19 18"><path d="M18.5 9L9 0.5V4.5H0.5V13.5H9V17.5z" fill="#fb7d0e" stroke="#fb7d0e" stroke-width="0.8" stroke-linejoin="round"/></svg></div>
<div class="a" style="left:46.5px;top:0;width:1px;height:100%;background:#e3e3e3"></div>
<div class="cell" style="left:47.5px;width:60.0px;border-right:none"><span style="top:8.1px">7</span></div>
<div class="a" style="left:106.5px;top:0;width:1px;height:100%;background:#e3e3e3"></div>
<div class="cell" style="left:107.5px;width:109.5px;border-right:none"><span style="top:8.1px">окт 16, 1:58:11</span></div>
<div class="a" style="left:216.0px;top:0;width:1px;height:100%;background:#e3e3e3"></div>
<div class="cell" style="left:217px;width:254px;border-right:none"><span style="top:8.1px">audioconf.out.src: Waiting for the</span></div>
<div class="a" style="left:0;bottom:0;width:100%;height:1px;background:#ededed"></div>
</div>
<div class="a" style="left:1284px;top:556.331px;width:471px;height:38.333px;background:#fafafa;overflow:hidden">
<div class="cell" style="left:-1px;width:48.5px;border-right:none"><svg style="position:absolute;left:12px;top:8px" width="19" height="18" viewBox="0 0 19 18"><path d="M18.5 9L9 0.5V4.5H0.5V13.5H9V17.5z" fill="#fb7d0e" stroke="#fb7d0e" stroke-width="0.8" stroke-linejoin="round"/></svg></div>
<div class="a" style="left:46.5px;top:0;width:1px;height:100%;background:#e3e3e3"></div>
<div class="cell" style="left:47.5px;width:60.0px;border-right:none"><span style="top:8.1px">8</span></div>
<div class="a" style="left:106.5px;top:0;width:1px;height:100%;background:#e3e3e3"></div>
<div class="cell" style="left:107.5px;width:109.5px;border-right:none"><span style="top:8.1px">окт 16, 1:58:11</span></div>
<div class="a" style="left:216.0px;top:0;width:1px;height:100%;background:#e3e3e3"></div>
<div class="cell" style="left:217px;width:254px;border-right:none"><span style="top:8.1px">audioconf.out.src: Waiting for the</span></div>
<div class="a" style="left:0;bottom:0;width:100%;height:1px;background:#ededed"></div>
</div>
<div class="a" style="left:1284px;top:594.664px;width:471px;height:38.333px;background:#fff;overflow:hidden">
<div class="cell" style="left:-1px;width:48.5px;border-right:none"><svg style="position:absolute;left:13px;top:10px" width="16" height="16" viewBox="0 0 16 16"><circle cx="8" cy="8" r="7.7" fill="#c4c4c4"/></svg></div>
<div class="a" style="left:46.5px;top:0;width:1px;height:100%;background:#e3e3e3"></div>
<div class="cell" style="left:47.5px;width:60.0px;border-right:none"><span style="top:8.1px">9</span></div>
<div class="a" style="left:106.5px;top:0;width:1px;height:100%;background:#e3e3e3"></div>
<div class="cell" style="left:107.5px;width:109.5px;border-right:none"><span style="top:8.1px">окт 16, 1:58:05</span></div>
<div class="a" style="left:216.0px;top:0;width:1px;height:100%;background:#e3e3e3"></div>
<div class="cell" style="left:217px;width:254px;border-right:none"><span style="top:8.1px">Line is free (0/0; 0/1)</span></div>
<div class="a" style="left:0;bottom:0;width:100%;height:1px;background:#ededed"></div>
</div>
<div class="a" style="left:1284px;top:632.997px;width:471px;height:38.333px;background:#fafafa;overflow:hidden">
<div class="cell" style="left:-1px;width:48.5px;border-right:none"><svg style="position:absolute;left:13px;top:10px" width="16" height="16" viewBox="0 0 16 16"><circle cx="8" cy="8" r="7.7" fill="#c4c4c4"/></svg></div>
<div class="a" style="left:46.5px;top:0;width:1px;height:100%;background:#e3e3e3"></div>
<div class="cell" style="left:47.5px;width:60.0px;border-right:none"><span style="top:8.1px">10</span></div>
<div class="a" style="left:106.5px;top:0;width:1px;height:100%;background:#e3e3e3"></div>
<div class="cell" style="left:107.5px;width:109.5px;border-right:none"><span style="top:8.1px">окт 16, 1:50:31</span></div>
<div class="a" style="left:216.0px;top:0;width:1px;height:100%;background:#e3e3e3"></div>
<div class="cell" style="left:217px;width:254px;border-right:none"><span style="top:8.1px">Line is free (0/0; 0/0)</span></div>
<div class="a" style="left:0;bottom:0;width:100%;height:1px;background:#ededed"></div>
</div>
<div class="a" style="left:801px;top:599px;width:474px;height:161px;background:#fff;border:1px solid #99bbe8;border-bottom:none"></div>
<div class="a" style="left:802px;top:600px;width:472px;height:39px;background:linear-gradient(#dde8f6 0%,#d7e3f4 48%,#c1d5f0 49%,#c8daf2 100%)"></div>
<div class="t" style="left:812.5px;top:610.5px;font-size:16.5px;font-weight:bold;color:#15428b;letter-spacing:0.2px">Conference resources</div>
<div class="t" style="left:811px;top:652px;font-size:16px;color:#000">Free conf resources</div>
<div class="t" style="left:1216px;top:652px;font-size:16px;color:#000">2</div>
<div class="t" style="left:811px;top:672px;font-size:16px;color:#000">Free voice resources</div>
<div class="t" style="left:1216px;top:672px;font-size:16px;color:#000">12</div>
<div class="t" style="left:811px;top:692px;font-size:16px;color:#000">Conferences</div>
<div class="t" style="left:1216px;top:692px;font-size:16px;color:#000">1</div>
<div class="a" style="left:0;top:759px;width:1764px;height:1px;background:#99bbe8"></div>
<div class="btn" style="left:1303px"><span style="left:43.5px">Settings</span></div>
<div class="btn" style="left:1453px"><span style="left:57.5px">Refresh</span><svg style="position:absolute;left:28px;top:8px" width="25" height="25" viewBox="0 0 25 25"><path d="M22.3 11A9.6 9.6 0 0 0 5.5 6.5" fill="none" stroke="#3a9e73" stroke-width="3.2"/><path d="M0.5 1V10.5H10z" fill="#3a9e73"/><path d="M2.7 14A9.6 9.6 0 0 0 19.5 18.5" fill="none" stroke="#3a9e73" stroke-width="3.2"/><path d="M24.3 24V14.5H15z" fill="#3a9e73"/></svg></div>
<div class="btn" style="left:1603px"><span style="left:53.5px">Close</span></div>
<svg class="a" style="left:0;top:0" width="1764" height="822" viewBox="0 0 1764 822"><g fill="#d6d6d6"><path d="M0 0H10A10 10 0 0 0 0 10z"/><path d="M1764 0H1754A10 10 0 0 1 1764 10z"/><path d="M0 822H10A10 10 0 0 1 0 812z"/><path d="M1764 822H1754A10 10 0 0 0 1764 812z"/></g></svg>
<div class="a" style="left:0;top:0;width:1764px;height:822px;border:2px solid #0a6fd2;border-radius:10px;pointer-events:none"></div>
</body></html>
